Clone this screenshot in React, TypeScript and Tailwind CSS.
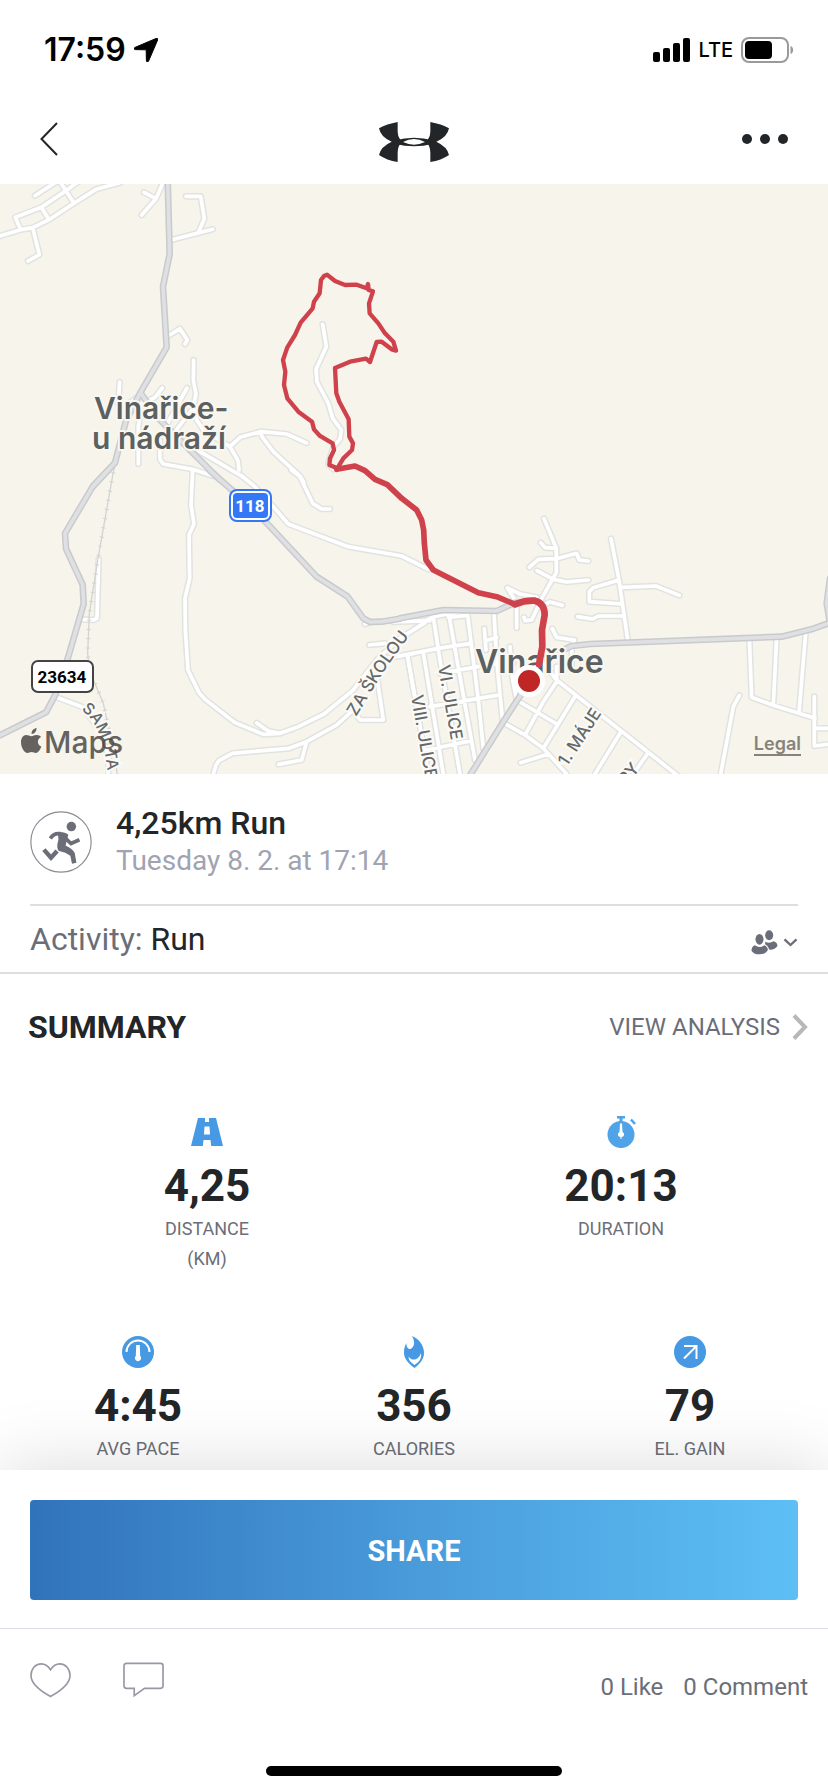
import React from "react";

type Sheet = { at: string; d: string };

const NW = "translate(0 180) scale(.33333)";
const SW = "translate(0 470) scale(.33333)";
const LOOP = "translate(250 250) scale(.33333)";
const TOWN = "translate(400 500) scale(.33333)";

const streets: Sheet[] = [
  {
    at: NW,
    d: "M105 47L170 5M0 168L62 149L98 143L147 119L222 70L288 28L360 8M62 149L46 112L124 82L198 32L235 5M124 82L147 119M180 5L222 70M98 143L118 224L84 243M432 37L468 56M490 5L468 56L425 105M558 49L602 49L613 116L594 160M513 180L638 148M504 468L540 446L562 480L555 492M359 606L355 672L385 672L415 650M581 540L580 600L588 642L580 680L590 720L610 750L690 800L720 772L782 755L860 762L920 789M782 755L786 770L820 815L900 888L912 908M690 800L714 842L717 870M487 624L465 652L425 672L415 740L415 852M561 624L500 735M575 690L525 755M480 780L480 838L490 852L578 868L640 888M520 765L600 815L725 888M968 433L979 500L948 568L951 606L985 670L998 715L1024 750L1020 778L1000 800L985 852L1000 868",
  },
  {
    at: SW,
    d: "M725 18L765 50L820 110L865 162L1045 230L1205 258L1285 298M578 0L573 105L582 162L567 195L569 325L555 385L556 480L564 600L597 668L615 688L705 758L790 793L840 790L895 770L972 732L1060 660L1130 570L1200 505L1275 458M770 759L805 783L840 790M640 912L648 885L657 872L697 850L867 835L920 815L1010 765L1060 720L1080 750L1150 750L1131 622L1110 618M920 815L905 870L836 883M296 268L291 445L280 450L245 448M165 680L245 710L300 780L325 860L325 912M1108 525L1155 520M1155 566L1242 550M1222 555L1255 740M874 0L900 20L938 100L965 117L990 117M1095 462L1115 456M1180 456L1290 452",
  },
  {
    at: TOWN,
    d: "M432 56L469 145L469 218L428 290L395 360L375 362L372 352M422 128L435 143L469 145M388 202L415 178L469 176L530 160L538 180L565 183M411 212L460 238L500 246L565 240M633 116L657 240L667 310L684 425M657 240L580 263L568 275L568 305L667 312M663 262L768 258L838 286M533 350L578 357L595 348L672 348M322 264L345 300M322 264L360 282L410 292M350 320V384M430 315L450 306L487 316M457 386L470 412L524 420L515 438L515 500M70 367L100 350L180 335M100 352L120 480L180 822M148 352L225 780M145 352L203 346L235 600L250 745M282 340L290 480L308 665M253 386L258 450M258 422L290 412M0 468L115 445L213 430M22 465L55 650L85 822M70 460L100 640L130 822M120 520L290 490L340 490M90 620L290 586M80 750L215 722M330 440L338 540L350 600M430 490L470 540L850 840M470 500V545L430 605L375 705M525 590L430 745M350 600L470 672M310 668L375 705L430 745L500 822M445 762L362 788M660 700L585 822M742 762L700 822M1048 415L1055 592L1120 616L1245 655M1130 412L1120 614M1217 400L1197 638M1243 590V738L1290 732M1243 685H1290M1018 586L1000 620L962 822",
  },
];

const mainRoads: Sheet[] = [
  { at: NW, d: "M503 -4L509 222L489 320L500 502L421 638L378 722L345 848L280 917M421 638L480 720L550 790L660 900" },
  {
    at: SW,
    d: "M325 0L278 50L195 190L198 236L248 344L251 402L205 560L165 676L138 727L0 796M630 2L690 55L750 105L950 320L1043 380L1090 445L1110 456L1145 455L1200 446",
  },
  {
    at: TOWN,
    d: "M0 355L130 330L290 333L345 308M430 478L515 438L570 432L1145 410L1240 386L1290 368M1290 235L1280 310L1290 368M388 545L310 665L210 826",
  },
];

function Roads({ sheets, stroke, width }: { sheets: Sheet[]; stroke: string; width: number }) {
  return (
    <g fill="none" stroke={stroke} strokeWidth={width} strokeLinecap="round" strokeLinejoin="round">
      {sheets.map((s) => (
        <path key={s.at} transform={s.at} d={s.d} />
      ))}
    </g>
  );
}

function RouteMap() {
  return (
    <svg viewBox="0 184 828 590" className="block h-auto w-full bg-[#f7f4eb]" role="img" aria-label="Route map">
      <defs>
        <path id="skolou" d="M356 717L375 686Q385 668 414 630" />
        <path id="samota" d="M81 710Q106 726 109 790" />
      </defs>
      <Roads sheets={streets} stroke="#e1e3e1" width={20} />
      <Roads sheets={streets} stroke="#ffffff" width={11} />
      <g transform={SW} fill="none" stroke="#d3d3d1">
        <path d="M348 -20L341 0L295 260L268 430L263 550L268 600L310 700L340 840L352 912" strokeWidth="4" />
        <path
          d="M348 -20L341 0L295 260L268 430L263 550L268 600L310 700L340 840L352 912"
          strokeWidth="13"
          strokeDasharray="3 25"
        />
      </g>
      <Roads sheets={mainRoads} stroke="#c9cacc" width={20} />
      <Roads sheets={mainRoads} stroke="#dfe0e4" width={11} />

      <g
        fontFamily="Inter, sans-serif"
        fontSize="30"
        fontWeight="600"
        fill="#5b6061"
        stroke="#f9f7f0"
        strokeWidth="4"
        paintOrder="stroke"
        strokeLinejoin="round"
      >
        <text x="94" y="419">Vinařice-</text>
        <text x="92" y="449">u nádraží</text>
        <text x="475" y="673" fontSize="32">Vinařice</text>
      </g>
      <g
        fontFamily="Inter, sans-serif"
        fontSize="17"
        fontWeight="500"
        fill="#66696a"
        stroke="#fbfaf6"
        strokeWidth="4"
        paintOrder="stroke"
      >
        <text>
          <textPath href="#skolou">ZA ŠKOLOU</textPath>
        </text>
        <text fontSize="16">
          <textPath href="#samota">SAMOTA</textPath>
        </text>
        <text transform="translate(438 666) rotate(80)">VI. ULICE</text>
        <text transform="translate(411 696) rotate(80)">VIII. ULICE</text>
        <text transform="translate(567 767) rotate(-57)">1. MÁJE</text>
        <text transform="translate(626 786) rotate(-50)">RY</text>
      </g>

      <g fill="none" stroke="#d0424b" strokeLinecap="round" strokeLinejoin="round">
        <path
          transform={LOOP}
          strokeWidth="13"
          d="M262 655L238 645L240 625L252 600L248 580L210 558L192 538L186 515L145 485L112 445L102 405L106 365L99 330L112 292L135 255L152 218L188 175L192 155L209 130L213 90L222 78L231 74L255 93L285 105L320 104L350 115L354 102L356 120L369 124L357 160L359 190L385 220L405 250L430 275L438 302L425 298L395 275L380 276L360 336L348 326L300 335L255 354L259 430L268 455L296 508L298 560L309 580L306 600L280 625L262 655"
        />
        <path
          transform={LOOP}
          strokeWidth="17"
          d="M260 658L315 648L345 662L375 688L412 704L455 745L500 780L515 810L521 840L523 880L528 930L550 960L590 980L685 1028L740 1040L795 1063"
        />
        <path
          transform={TOWN}
          strokeWidth="20"
          d="M345 313Q375 300 405 302Q434 310 434 345L426 390L427 440L417 493"
        />
      </g>
      <circle cx="529" cy="681" r="16" fill="#fff" />
      <circle cx="529" cy="681" r="11" fill="#c02626" />

      <rect x="229" y="489" width="43" height="33" rx="8" fill="#3478f6" />
      <rect x="232" y="492" width="37" height="27" rx="5" fill="none" stroke="#fff" strokeWidth="2" />
      <text x="250" y="512" textAnchor="middle" fontFamily="Roboto, sans-serif" fontWeight="700" fontSize="17" fill="#fff">
        118
      </text>
      <rect x="32" y="661" width="61" height="31" rx="6" fill="#fff" stroke="#444445" strokeWidth="2" />
      <text x="62" y="683" textAnchor="middle" fontFamily="Roboto, sans-serif" fontWeight="700" fontSize="17" fill="#000">
        23634
      </text>

      <g fill="#4b4a47" opacity=".85">
        <path d="M37 735c-2.500-.2-4 1.200-5.500 1.200S28 735 26.200 735c-3 .2-5.200 3-5.200 7.200 0 5.200 3.400 10.800 6.400 10.800 1.500 0 2.400-1 4.300-1s2.700 1 4.300 1c2.300 0 4.400-3.600 5.300-6.400-4.600-2-4.400-7.800-.3-9.700-1-1.200-2.400-1.900-4-1.900zM36.500 728c-2.800.3-5.200 3-4.900 6 2.800.1 5.200-3 4.900-6z" />
        <text x="44" y="753" fontFamily="Inter, sans-serif" fontSize="30" fontWeight="500">
          Maps
        </text>
      </g>
    </svg>
  );
}

function RoadIcon() {
  return (
    <svg viewBox="0 0 32 32" className="size-8" aria-hidden="true">
      <path d="M7 2H25L32 30H0Z" fill="#4699e2" />
      <path d="M14 2h4v4h-4zM13.500 10.500h5l.5 8h-6zM12.500 24h7l.7 6h-8.400z" fill="#fff" />
    </svg>
  );
}

function StopwatchIcon() {
  return (
    <svg viewBox="0 0 32 32" className="size-8" fill="#4fa3e6" aria-hidden="true">
      <circle cx="16" cy="18.500" r="13.500" />
      <path d="M12 0h8v2.400h-2.500V6h-3V2.400H12z" />
      <path d="M26 3.500l4 4.500" stroke="#4fa3e6" strokeWidth="2.600" />
      <path d="M15 7.500h2l.5 8.500a2.600 2.600 0 0 1-1 5v2h-1v-2a2.600 2.600 0 0 1-1-5z" fill="#fff" />
    </svg>
  );
}

function PaceIcon() {
  return (
    <svg viewBox="0 0 32 32" className="size-8" aria-hidden="true">
      <circle cx="16" cy="16" r="16" fill="#4699e2" />
      <path d="M4.500 16a11.500 11.500 0 0 1 23 0" fill="none" stroke="#fff" strokeWidth="2" />
      <path d="M14.200 9h3.600l.4 11a3 3 0 1 1-4.400 0z" fill="#fff" />
    </svg>
  );
}

function FlameIcon() {
  return (
    <svg viewBox="0 0 32 32" className="size-8" aria-hidden="true">
      <path d="M14 0c7 3 12 9 12 17 0 6-4 11-9.500 15C11 28 6 23 6 17c0-4 .5-7 2.500-10C8 11 10 13 12.500 13 17 11 17 5 14 0z" fill="#4699e2" />
      <path d="M10.500 20.500c3 5 10 4 12.500-3.500.8 6-2 9-6.500 12-4-2.500-6-5-6-8.500z" fill="#fff" />
      <path d="M12.500 23c2.500 2.200 6 2 8-.3-.7 1.800-2 3-4 4.500-2-1.200-3.200-2.300-4-4.200z" fill="#fff" />
    </svg>
  );
}

function GainIcon() {
  return (
    <svg viewBox="0 0 32 32" className="size-8" aria-hidden="true">
      <circle cx="16" cy="16" r="16" fill="#4699e2" />
      <path d="M10 10h12.500v13M22 10.500L10 22.500" fill="none" stroke="#fff" strokeWidth="2" />
    </svg>
  );
}

function RunnerBadge() {
  return (
    <svg viewBox="14 28 183 183" className="size-[62px]" aria-hidden="true">
      <circle cx="105.500" cy="119.500" r="89" fill="#fff" stroke="#8b8d94" strokeWidth="3.500" />
      <circle cx="136" cy="74" r="14" fill="#6b6e78" />
      <path d="M96 90Q116 88 127 98L119 130Q140 140 146 152L151 181L138 184L133 160Q120 150 100 146Q90 140 98 112Z" fill="#6b6e78" />
      <g fill="none" stroke="#6b6e78" strokeWidth="11">
        <path d="M74 109Q84 92 104 95" />
        <path d="M116 106L135 124L160 113" />
        <path d="M55 142L76 166L94 146" strokeWidth="13" />
      </g>
    </svg>
  );
}

function Logo() {
  const wing = "M113 66Q80 72 57 85Q62 112 95 125Q62 140 57 165Q80 181 113 186V158Q114 140 120 133L122 126L120 118Q113 108 113 95Z";
  return (
    <svg viewBox="57 66 210 120" className="h-10 w-[70px]" fill="#222629" aria-label="Under Armour" role="img">
      <path d={wing} />
      <path d={wing} transform="translate(324 0) scale(-1 1)" />
      <path fillRule="evenodd" d="M105 121Q162 105 219 121V131Q162 146 105 131ZM129 126Q162 108 195 126Q162 142 129 126Z" />
    </svg>
  );
}

function Stat({ icon, value, label }: { icon: React.ReactNode; value: string; label: React.ReactNode }) {
  return (
    <li className="flex flex-col items-center text-center">
      {icon}
      <span className="mt-3 text-[44px] leading-[52px] font-bold text-[#222629]">{value}</span>
      <span className="mt-0.5 text-lg leading-[30px] text-[#6b6e78]">{label}</span>
    </li>
  );
}

export default function App() {
  return (
    <div className="flex min-h-screen flex-col bg-white font-['Roboto',sans-serif] text-[#222629]">
      <div className="flex h-[100px] items-center justify-between pr-[34px] pl-11 font-['Inter',sans-serif] text-black">
        <div className="flex items-center gap-2">
          <span className="text-[32px] leading-10 font-semibold">17:59</span>
          <svg viewBox="0 0 24 24" className="size-6" stroke="#000" aria-hidden="true">
            <path d="M22.500.3c1-.4 1.700.4 1.300 1.300L14.600 23c-.5 1.300-2.100 1.200-2.200-.3l-.2-10.200c0-.5-.2-.7-.7-.7L1.300 11.600c-1.500-.1-1.700-1.700-.3-2.200z" />
          </svg>
        </div>
        <div className="flex items-center gap-2">
          <svg viewBox="0 0 37 24" className="h-6 w-[37px]" aria-hidden="true">
            <rect x="0" y="14" width="7" height="10" rx="2" />
            <rect x="10" y="10" width="7" height="14" rx="2" />
            <rect x="20" y="5" width="7" height="19" rx="2" />
            <rect x="30" y="0" width="7" height="24" rx="2" />
          </svg>
          <span className="text-xl leading-6 font-medium">LTE</span>
          <svg viewBox="0 0 53 26" className="h-[26px] w-[53px]" aria-hidden="true">
            <rect x="1" y="1" width="46" height="24" rx="7" fill="none" stroke="#9a9a9a" strokeWidth="2" />
            <rect x="4" y="4" width="27" height="18" rx="4" />
            <path d="M49.500 9c3.500 1 3.500 7 0 8z" fill="#9a9a9a" />
          </svg>
        </div>
      </div>

      <header className="grid h-[84px] grid-cols-3 items-center px-10">
        <button type="button" aria-label="Back" className="justify-self-start pb-1.5">
          <svg viewBox="0 0 18 34" className="block h-[34px] w-[18px]" fill="none" stroke="#222629" strokeWidth="2">
            <path d="M17 1L1.500 17L17 33" />
          </svg>
        </button>
        <div className="justify-self-center">
          <Logo />
        </div>
        <button type="button" aria-label="More" className="flex gap-2 justify-self-end pb-1.5">
          <span className="size-2.5 rounded-full bg-[#222629]" />
          <span className="size-2.5 rounded-full bg-[#222629]" />
          <span className="size-2.5 rounded-full bg-[#222629]" />
        </button>
      </header>

      <section className="relative">
        <RouteMap />
        <a
          href="#legal"
          className="absolute right-[27px] bottom-[18px] border-b-2 border-[#85837b] font-['Inter',sans-serif] text-lg leading-5 font-semibold text-[#85837b]"
        >
          Legal
        </a>
      </section>

      <main className="flex-1">
        <section className="border-b-2 border-[#dddde2] px-[30px]">
          <div className="flex items-center gap-6 border-b-2 border-[#dddde2] pt-[30px] pb-6">
            <RunnerBadge />
            <div>
              <h1 className="text-[32px] leading-[38px] font-medium">4,25km Run</h1>
              <p className="text-[28px] leading-[38px] text-[#a0a3b2]">Tuesday 8. 2. at 17:14</p>
            </div>
          </div>
          <div className="flex h-[66px] items-center justify-between">
            <p className="text-[32px] leading-9">
              <span className="text-[#6b6e78]">Activity:</span> Run
            </p>
            <button type="button" aria-label="Privacy">
              <svg viewBox="29 34 140 75" className="mt-1.5 block h-[25px] w-[47px]" fill="#6b6e78">
                <ellipse cx="54" cy="62" rx="12" ry="16" />
                <ellipse cx="83" cy="50" rx="12" ry="15" />
                <path d="M40 80Q54 90 68 80Q79 84 79 95Q72 107 54 107Q36 107 30 96Q30 84 40 80Z" />
                <path d="M71 69Q84 76 96 68Q108 72 108 82Q100 94 84 93Q81 82 71 77Z" />
                <path d="M129 62L147 79L165 62" fill="none" stroke="#6b6e78" strokeWidth="7" />
              </svg>
            </button>
          </div>
        </section>

        <section>
          <div className="flex h-[106px] items-center justify-between pr-5 pl-7">
            <h2 className="text-[32px] leading-10 font-bold">SUMMARY</h2>
            <a href="#analysis" className="flex items-center gap-3 text-2xl text-[#6b6e78]">
              VIEW ANALYSIS
              <svg viewBox="0 0 16 26" className="h-[26px] w-4" fill="none" stroke="#b8b8bb" strokeWidth="4" aria-hidden="true">
                <path d="M2 1.500L13 13L2 24.500" />
              </svg>
            </a>
          </div>
          <ul className="mt-9 grid grid-cols-2">
            <Stat icon={<RoadIcon />} value="4,25" label={<>DISTANCE<br />(KM)</>} />
            <Stat icon={<StopwatchIcon />} value="20:13" label="DURATION" />
          </ul>
          <ul className="mt-[62px] grid grid-cols-3 pb-1.5">
            <Stat icon={<PaceIcon />} value="4:45" label="AVG PACE" />
            <Stat icon={<FlameIcon />} value="356" label="CALORIES" />
            <Stat icon={<GainIcon />} value="79" label="EL. GAIN" />
          </ul>
        </section>
      </main>

      <footer className="sticky bottom-0 bg-white shadow-[0_0_70px_rgba(0,0,0,0.15)]">
        <div className="border-b border-[#dddde6] px-[30px] pt-[30px] pb-7">
          <button
            type="button"
            className="h-[100px] w-full rounded bg-linear-to-r from-[#3173bb] via-[#499bda] to-[#5dbff5] pt-1 text-[29px] font-bold text-white"
          >
            SHARE
          </button>
        </div>
        <div className="flex items-end justify-between pt-[33px] pr-5 pl-[30px]">
          <div className="flex gap-[52px]">
            <button type="button" aria-label="Like">
              <svg viewBox="0 0 42 36" className="block h-9 w-[41px]" fill="none" stroke="#9699a5" strokeWidth="1.700">
                <path d="M21 7.500C18 3 14.500 1.500 11.500 1.500C5.500 1.500 1 6.500 1 13.500C1 22 11 29.500 21 35C31 29.500 41 22 41 13.500C41 6.500 36.500 1.500 30.500 1.500C27.500 1.500 24 3 21 7.500Z" />
              </svg>
            </button>
            <button type="button" aria-label="Write a comment">
              <svg viewBox="0 0 42 36" className="block h-9 w-[41px]" fill="none" stroke="#9699a5" strokeWidth="1.700">
                <path d="M3.500 1H38.500Q41 1 41 3.500V24Q41 26.500 38.500 26.500H22L11.500 34V26.500H3.500Q1 26.500 1 24V3.500Q1 1 3.500 1Z" />
              </svg>
            </button>
          </div>
          <div className="flex gap-5 text-2xl leading-[22px] text-[#6b6e78]">
            <a href="#likes">0 Like</a>
            <a href="#comments">0 Comment</a>
          </div>
        </div>
        <div className="mx-auto mt-[68px] mb-4 h-2.5 w-[296px] rounded-full bg-black" />
      </footer>
    </div>
  );
}
